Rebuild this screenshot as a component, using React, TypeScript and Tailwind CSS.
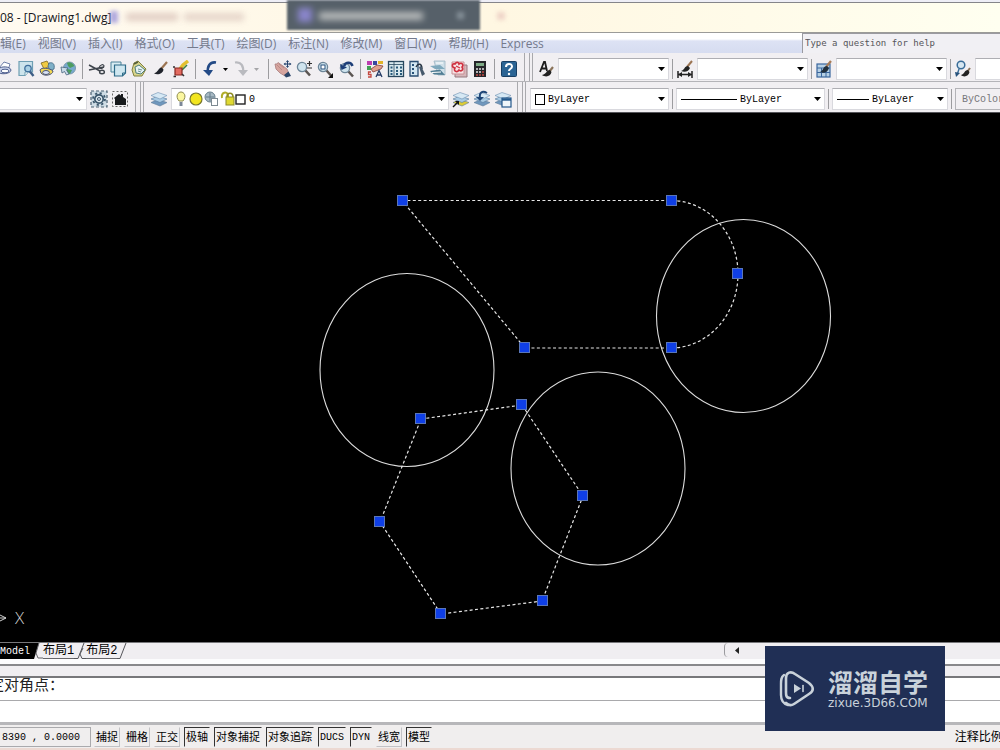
import type { ReactNode } from "react";
import { clsx } from "clsx";

const menus = [
  "编辑(E)",
  "视图(V)",
  "插入(I)",
  "格式(O)",
  "工具(T)",
  "绘图(D)",
  "标注(N)",
  "修改(M)",
  "窗口(W)",
  "帮助(H)",
  "Express",
];

const statusModes = [
  { label: "捕捉", on: false },
  { label: "栅格", on: false },
  { label: "正交", on: false },
  { label: "极轴", on: true },
  { label: "对象捕捉", on: true },
  { label: "对象追踪", on: true },
  { label: "DUCS", on: true, latin: true },
  { label: "DYN", on: true, latin: true },
  { label: "线宽", on: false },
  { label: "模型", on: true },
];

const Icon = ({ children }: { children: ReactNode }) => (
  <svg width="18" height="18" viewBox="0 0 18 18" fill="none" className="shrink-0">
    {children}
  </svg>
);

const Lens = ({ cx = 7, cy = 7 }: { cx?: number; cy?: number }) => (
  <>
    <path d={`M${cx + 3} ${cy + 3} l5 5.5`} stroke="#5b5552" strokeWidth="2.6" />
    <circle cx={cx} cy={cy} r="4.6" fill="#cfe4ee" stroke="#6d8699" strokeWidth="1.3" />
  </>
);

const Sheets = ({ bottom = "#6f97bd" }: { bottom?: string }) => (
  <>
    <path d="M1 12.5 L8 9.5 L17 12.5 L10 16 Z" fill={bottom} stroke="#5f7c98" strokeWidth=".6" />
    <path d="M1 9 L8 6 L17 9 L10 12.5 Z" fill="#a9cbe4" stroke="#54789c" strokeWidth=".6" />
    <path d="M1 5.5 L8 2.5 L17 5.5 L10 9 Z" fill="#d6e8f4" stroke="#6b8fb0" strokeWidth=".6" />
  </>
);

const Brush = () => (
  <>
    <path d="M16 2 L10 9" stroke="#9b7452" strokeWidth="2.2" />
    <path d="M10.5 7.5 C7 8 7.5 12 3 13.5 C7 15.5 12 13.5 12.5 9.5 Z" fill="#20242c" />
  </>
);

const icons: Record<string, ReactNode> = {
  plot: (
    <>
      <path d="M3 8 L8 2 L14 4 L12 10 Z" fill="#fff" stroke="#6f7fa8" />
      <path d="M2 9 C5 6 14 6 15 10 C15 14 4 15 2 12 Z" fill="#c6cfe8" stroke="#51618f" />
      <ellipse cx="9" cy="11" rx="4" ry="1.8" fill="#fff" stroke="#51618f" />
    </>
  ),
  preview: (
    <>
      <path d="M2 1.5 H15.5 V12 H11 L8 15.5 H2 Z" fill="#cde4ec" stroke="#6f9fb3" strokeWidth="1.2" />
      <path d="M8 15.5 V12 H11" fill="#fff" stroke="#6f9fb3" />
      <path d="M12.5 11 L16.5 16" stroke="#3d5e86" strokeWidth="2.4" />
      <circle cx="11" cy="8.5" r="3.2" fill="#a9d0e4" stroke="#3f6f9c" strokeWidth="1.3" />
    </>
  ),
  publish: (
    <>
      <path d="M3 3 L9 1 L12 6 L6 9 Z" fill="#f0ca42" stroke="#7b641d" strokeWidth=".8" />
      <path d="M11 3 C15 2 17 4 16 9 L12 11 L10 6 Z" fill="#7fb0c8" stroke="#3d6580" strokeWidth=".8" />
      <path d="M2 10 C3 7 12 8 15 11 C15 15 6 17 3 13 Z" fill="#f3d852" stroke="#4a5478" />
      <ellipse cx="8" cy="12.5" rx="3.4" ry="2" fill="#d8e1f3" stroke="#4a5478" />
    </>
  ),
  globe: (
    <>
      <circle cx="10.5" cy="8" r="6" fill="#77a9ce" stroke="#7b98ac" />
      <path d="M8 3 C10 1 14 3 15.5 6 L11 8 L9 6 Z M8 9 L13 10 L11 14 L7 13 Z" fill="#4d9c60" />
      <path d="M2 7 L9 8 L7.5 10 L10 14 L7.5 15 L5.5 11.5 L3 13 Z" fill="#c9dbe9" stroke="#47657e" strokeWidth=".8" />
    </>
  ),
  cut: (
    <>
      <path d="M1 5 L12 11 M1 10 L16 7" stroke="#3e444c" strokeWidth="1.5" />
      <ellipse cx="14" cy="12" rx="2.4" ry="1.8" stroke="#3e444c" strokeWidth="1.4" />
      <path d="M11 8 C12 4 16 4 16 6 C16 8 13 9 11 8" stroke="#3e444c" strokeWidth="1.2" />
    </>
  ),
  copy: (
    <>
      <path d="M2 2 H12 V12 H2 Z" fill="#d8edf3" stroke="#4c8299" />
      <path d="M5.5 5 H16.5 V13 L13.5 16 H5.5 Z" fill="#cfe7f0" stroke="#2d6b88" strokeWidth="1.2" />
      <path d="M13.5 16 V13 H16.5" stroke="#2d6b88" />
    </>
  ),
  paste: (
    <>
      <path d="M4 3 L8 1 L16 9 L12 16 H4 L2 10 Z" fill="#d9d58c" stroke="#81803e" />
      <path d="M5 7 L9 5 L15 10 L11 14 L6 13 Z" fill="#e8f3f5" stroke="#4d7e7a" />
      <path d="M8 9 L12 10 M8 11 L11 12" stroke="#4d7e7a" strokeWidth=".8" />
      <path d="M4 4 L8 2" stroke="#525c3b" strokeWidth="1.5" />
    </>
  ),
  brush: <Brush />,
  blockEdit: (
    <>
      <path d="M16 1 L11 5 L8 9" stroke="#e3c02e" strokeWidth="3.4" />
      <path d="M15 5 L10 10" stroke="#3c8043" strokeWidth="1.6" />
      <path d="M3 8 H10 V15 H3 Z" fill="#e36b60" stroke="#872823" strokeWidth="1.2" />
      <path d="M1.5 16.5 H4 M10 14 L12 16 M2 6 V8" stroke="#333" strokeWidth="1.5" />
    </>
  ),
  undo: (
    <>
      <path d="M15 2.5 C9 1.5 6 6 7 13" stroke="#234a86" strokeWidth="2.6" />
      <path d="M2 10 L8 16 L12 10 Z" fill="#234a86" />
    </>
  ),
  redo: (
    <>
      <path d="M3 2.5 C9 1.5 12 6 11 13" stroke="#b9babf" strokeWidth="2.2" />
      <path d="M6 10 L11 16 L16 10 Z" fill="#b9babf" />
    </>
  ),
  pan: (
    <>
      <path d="M1 4 L3 4 L4 2.5 L9 6 L13 9 L15 14 L11 16 L6 13 L2 9 Z" fill="#d6a49e" stroke="#a87c7c" strokeWidth=".8" />
      <path d="M3 5 L8 10 M5 4 L10 8" stroke="#b48584" strokeWidth=".8" />
      <path d="M10 15 L14.5 11.5 L17 16 L12 17.5 Z" fill="#2b4468" />
      <path d="M13.5 1 V7 M10.5 4 H16.5" stroke="#26446e" strokeWidth="1.1" />
      <path d="M13.5 0 L15 2 H12 Z M13.5 8 L15 6 H12 Z M9.5 4 L11.5 2.5 V5.5 Z M17.5 4 L15.5 2.5 V5.5 Z" fill="#26446e" />
    </>
  ),
  zoomRealtime: (
    <>
      <Lens />
      <path d="M14.5 1 V6 M12 3.5 H17 M12 8 H17" stroke="#333" strokeWidth="1.2" />
    </>
  ),
  zoomWindow: (
    <>
      <Lens />
      <rect x="5" y="5" width="4" height="4" fill="#fff" stroke="#28517c" />
      <path d="M17 13 V18 H12 Z" fill="#111" />
    </>
  ),
  zoomPrevious: (
    <>
      <Lens cx={8} cy={8} />
      <path d="M15.5 6 C14 2 9 1.5 7 6" stroke="#1d3e78" strokeWidth="2.6" />
      <path d="M3 4 L10 7.5 L4.5 10 Z" fill="#1d3e78" />
    </>
  ),
  properties: (
    <>
      <rect x="1" y="1" width="5" height="4" fill="#bd3fb0" />
      <rect x="7" y="1" width="4" height="4" fill="#3748a0" />
      <rect x="12" y="1" width="5" height="3" fill="#e2b328" />
      <rect x="1" y="6" width="4" height="4" fill="#41a154" />
      <path d="M5 9 L11 5 L17 6 L15 9 L7 12 Z" fill="#e0a08f" stroke="#833f38" strokeWidth=".8" />
      <path d="M5 12 H2.5 V14.5 H5 V17 H2" stroke="#c4473f" strokeWidth="1.3" />
      <path d="M10 17 L13 10.5 L16 17 M11 15 H15" stroke="#263d68" strokeWidth="1.3" />
    </>
  ),
  designCenter: (
    <>
      <rect x="1.5" y="1.5" width="15" height="15" fill="#d8e8ee" stroke="#28475e" strokeWidth="1.3" />
      <path d="M7 2 V16 M2 4.5 H16" stroke="#28475e" strokeWidth=".8" />
      <path d="M3.5 7.5 H5.5 M3.5 11 H5.5 M3.5 14 H5.5 M9 7.5 H11 M13 7.5 H15 M9 11 H11 M13 11 H15 M9 14 H11 M13 14 H15" stroke="#28597a" strokeWidth="1.8" />
    </>
  ),
  palettes: (
    <>
      <path d="M2 1.5 H10 V16 H2 Z" fill="#d3e6f2" stroke="#2a4d72" strokeWidth="1.3" />
      <path d="M4 5 H6 M4 9 H6 M4 13 H6" stroke="#275179" strokeWidth="2" />
      <path d="M8 7 C10 3 14 3 14 9" stroke="#263342" strokeWidth="1.4" />
      <path d="M11 7 L13 6 L17 14 L14 16 Z" fill="#47596c" />
    </>
  ),
  sheetSet: (
    <>
      <path d="M5 1 H16 V15 H9 Z" fill="#cfdfe8" stroke="#9db4c2" strokeWidth=".8" />
      <path d="M1 6 L11 5 L16 9 L6 9 Z" fill="#7fa9bd" />
      <path d="M1 11 L11 9.5 L16 15 L5 14.5 Z" fill="#507d94" />
      <path d="M7 3 H14 M3 12.5 L12 12" stroke="#fff" />
    </>
  ),
  markup: (
    <>
      <path d="M5 5 H17 V17 H5 Z" fill="#d6b6ba" stroke="#96797e" />
      <path d="M2 2 H14 V14 H2 Z" fill="#f6e3e5" stroke="#c98e94" />
      <path d="M5 4 C7 1 9 3 9 4 C12 2 14 5 12 7 C14 10 11 12 9 10 C7 13 3 11 5 8 C1 7 2 3 5 4 Z" stroke="#cf2f3e" strokeWidth="1.6" />
      <path d="M6 6 L10 8" stroke="#cf2f3e" strokeWidth="1.2" />
    </>
  ),
  calculator: (
    <>
      <rect x="3" y="1" width="12" height="16" fill="#26262a" />
      <rect x="5" y="3" width="8" height="3" fill="#7eaa86" />
      <path d="M5 9 H7 M8 9 H10 M11 9 H13 M5 12 H7 M8 12 H10" stroke="#e4e4e4" strokeWidth="1.6" />
      <path d="M11 12 H13 M5 15 H7 M8 15 H10 M11 15 H13" stroke="#c24a43" strokeWidth="1.6" />
    </>
  ),
  help: (
    <>
      <rect x="1.5" y="1.5" width="15" height="15" rx="1" fill="#2b6494" stroke="#183f64" />
      <path d="M6 7 C6 3 12 3 12 6.5 C12 9 9 8.5 9 11" stroke="#fff" strokeWidth="2" />
      <circle cx="9" cy="14" r="1.2" fill="#fff" />
    </>
  ),
  textStyle: (
    <>
      <path d="M3 12 L7 2 H8 L10 11 M4.5 8.5 H10" stroke="#1d1d1d" strokeWidth="1.8" />
      <path d="M16 7 L12 12" stroke="#8a7359" strokeWidth="2.2" />
      <path d="M13 10 C9 10 10 14 5 15 C9 18 14 16 14.5 12 Z" fill="#222" />
    </>
  ),
  dimStyle: (
    <>
      <path d="M16 1 L11 7" stroke="#9b7452" strokeWidth="2" />
      <path d="M12 6 C8 6 9 10 5 11 C9 13 13 11 14 8 Z" fill="#222" />
      <path d="M2 11 V18 M16 11 V18 M2 14.5 H16" stroke="#222" strokeWidth="1.5" />
      <path d="M2 14.5 L6 12 V17 Z M16 14.5 L12 12 V17 Z" fill="#222" />
    </>
  ),
  tableStyle: (
    <>
      <rect x="2" y="4" width="13" height="13" fill="#b6d0e5" stroke="#3a669d" strokeWidth="1.2" />
      <path d="M2 8 H15 M2 12.5 H15 M6.5 8 V17 M11 8 V17" stroke="#3a669d" />
      <path d="M16 1 L11 7" stroke="#a97b56" strokeWidth="2.2" />
      <path d="M12 6 C8 6 9 10 5 12 C9 14 13 12 14 8 Z" fill="#22303d" />
    </>
  ),
  leaderStyle: (
    <>
      <circle cx="7" cy="5" r="3.8" fill="#d7e7f1" stroke="#396c98" strokeWidth="1.5" />
      <path d="M5 9 L3 15" stroke="#396c98" strokeWidth="1.4" />
      <path d="M1 12 L6 13 L2 17 Z" fill="#27527c" />
      <path d="M16 8 L13 12" stroke="#8a7359" strokeWidth="2" />
      <path d="M14 10 C10 10 11 14 7 15 C10 18 15 16 15.5 12 Z" fill="#222" />
    </>
  ),
  gear: (
    <>
      <rect x="1" y="1" width="16" height="16" fill="#cfdce5" stroke="#4a6072" strokeWidth="1.2" strokeDasharray="3 2" />
      <circle cx="9" cy="9" r="4.2" fill="#dfe9ef" stroke="#3b566c" strokeWidth="1.7" />
      <circle cx="9" cy="9" r="6" stroke="#3b566c" strokeWidth="1.8" strokeDasharray="2.2 2.5" />
      <circle cx="9" cy="9" r="1.5" stroke="#3b566c" />
    </>
  ),
  home: (
    <>
      <path d="M1.5 1.5 H16.5 V16.5 H1.5 Z" stroke="#666" strokeDasharray="2 2" />
      <path d="M3 8 L8 4 L10 5.5 V4 H12 V7 L15 9 V15 H4 V9 Z" fill="#17191c" />
    </>
  ),
  layers: <Sheets />,
  layerCurrent: (
    <>
      <Sheets bottom="#dccb35" />
      <path d="M1 17 L6 12" stroke="#111" strokeWidth="1.4" />
      <path d="M3 11 H7 V15 Z" fill="#111" />
    </>
  ),
  layerPrevious: (
    <>
      <Sheets />
      <path d="M14 3 C9 0 6 3 7 8" stroke="#1e4577" strokeWidth="2" />
      <path d="M3 7 H11 L7 11 Z" fill="#1e4577" />
    </>
  ),
  layerStates: (
    <>
      <Sheets />
      <rect x="8" y="8" width="9" height="9" fill="#eff6fa" stroke="#23588b" strokeWidth="1.2" />
      <path d="M8 9.5 H17" stroke="#23588b" strokeWidth="2.4" />
    </>
  ),
};

const ToolButton = ({ name, label }: { name: string; label: string }) => (
  <button type="button" aria-label={label} className="shrink-0">
    <Icon>{icons[name]}</Icon>
  </button>
);

const Group = ({ items }: { items: string[] }) => (
  <div className="flex shrink-0 items-center gap-[3px]">
    {items.map((name) => (
      <ToolButton key={name} name={name} label={name} />
    ))}
  </div>
);

const Arrow = ({ className = "text-black" }: { className?: string }) => (
  <svg width="7" height="4" viewBox="0 0 7 4" className={clsx("shrink-0", className)}>
    <path d="M0 0 H7 L3.5 4 Z" fill="currentColor" />
  </svg>
);

const SmallArrow = ({ label, className }: { label: string; className: string }) => (
  <button type="button" aria-label={label} className={clsx("flex w-[13px] shrink-0 justify-center", className)}>
    <svg width="5" height="3" viewBox="0 0 5 3">
      <path d="M0 0 H5 L2.5 3 Z" fill="currentColor" />
    </svg>
  </button>
);

const Separator = ({ className = "mx-[5px]" }: { className?: string }) => (
  <div className={clsx("h-5 w-px shrink-0 bg-[#9c9c9f]", className)} />
);

const Grip = () => (
  <div className="mx-1 flex h-full w-1 shrink-0 justify-between">
    <div className="w-px bg-[#a9a9ad]" />
    <div className="w-px bg-[#a9a9ad]" />
  </div>
);

const Combo = ({
  label,
  value = "",
  width,
  children,
}: {
  label: string;
  value?: string;
  width: string;
  children?: ReactNode;
}) => (
  <label
    className={clsx(
      "flex h-[22px] shrink-0 items-center gap-[3px] border border-[#d9d9de] border-t-[#aeaeb3] bg-white pr-[3px] pl-1",
      width,
    )}
  >
    {children}
    <select
      aria-label={label}
      className="min-w-0 flex-1 appearance-none bg-transparent font-['Liberation_Mono',monospace] text-[10px] text-black"
    >
      <option>{value}</option>
    </select>
    <Arrow />
  </label>
);

const TitleBar = () => (
  <header className="relative flex h-[33px] shrink-0 items-center overflow-hidden border-b border-[#9b9b98] bg-gradient-to-r from-[#fffaf0] via-[#fff7e2] to-[#fffff0]">
    <div className="absolute inset-x-0 top-0 h-[3px] border-b border-[#85858a] bg-[#eeeef6]" />
    <h1 className="mt-1 font-['Open_Sans',sans-serif] text-[12px] whitespace-nowrap text-[#16161a]">
      08 - [Drawing1.dwg]
    </h1>
    {/* Browser tabs showing through the glass */}
    <div className="absolute top-[11px] left-[110px] h-3 w-2 bg-[#8f86d8] opacity-70 blur-[2px]" />
    <div className="absolute top-[13px] left-[126px] h-2 w-[52px] bg-[#d6bdb4] opacity-70 blur-[3px]" />
    <div className="absolute top-[13px] left-[184px] h-2 w-[60px] bg-[#dcc7bd] opacity-70 blur-[3px]" />
    <div className="absolute top-0 left-[287px] h-[30px] w-[193px] bg-[#566069] blur-[1px]">
      <div className="absolute top-2 left-[11px] h-[14px] w-[14px] bg-[#8b86cc] blur-[3px]" />
      <div className="absolute top-3 left-[32px] h-2 w-[104px] bg-[#b9bcbc] blur-[3px]" />
      <div className="absolute top-3 left-[170px] h-[7px] w-[7px] bg-[#89949c] blur-[2px]" />
    </div>
    <div className="absolute top-[12px] left-[497px] h-2 w-2 bg-[#e8c6bd] opacity-70 blur-[2px]" />
  </header>
);

const MenuBar = () => (
  <nav className="flex h-5 shrink-0 items-stretch overflow-hidden bg-gradient-to-b from-white from-30% via-[#dde2f4] via-40% to-[#d6dcf0]">
    <div className="-ml-3 flex flex-1 items-center gap-3 pt-[2px] font-['Open_Sans','Noto_Sans_CJK_SC',sans-serif] text-[12px] text-[#747a8c]">
      {menus.map((menu) => (
        <button key={menu} type="button" className="shrink-0 whitespace-nowrap">
          {menu}
        </button>
      ))}
    </div>
    <input
      aria-label="Help search"
      defaultValue="Type a question for help"
      className="w-[198px] shrink-0 border-t border-l border-[#9a9aa0] bg-[#f1f0f4] pl-[2px] font-['DejaVu_Sans_Mono',monospace] text-[9px] text-[#55555a]"
    />
  </nav>
);

const StandardToolbar = () => (
  <div className="flex h-[29px] shrink-0 overflow-hidden border-b border-[#b4b4b8] bg-[#f1eff2]">
    <div className="-ml-1 flex shrink-0 items-center border-r border-[#a9a9ad] pt-1 pr-[6px]">
      <Group items={["plot", "preview", "publish", "globe"]} />
      <Separator />
      <Group items={["cut", "copy", "paste", "brush", "blockEdit"]} />
      <Separator />
      <ToolButton name="undo" label="Undo" />
      <SmallArrow label="Undo list" className="text-black" />
      <ToolButton name="redo" label="Redo" />
      <SmallArrow label="Redo list" className="text-[#a5a5a8]" />
      <Separator />
      <Group items={["pan", "zoomRealtime", "zoomWindow", "zoomPrevious"]} />
      <Separator />
      <Group items={["properties", "designCenter", "palettes", "sheetSet", "markup", "calculator"]} />
      <Separator />
      <ToolButton name="help" label="Help" />
    </div>
    <Grip />
    <div className="flex shrink-0 items-center gap-[3px] pt-1">
      <ToolButton name="textStyle" label="Text style" />
      <Combo label="Text style list" width="w-[111px]" />
      <Separator className="" />
      <ToolButton name="dimStyle" label="Dimension style" />
      <Combo label="Dimension style list" width="w-[111px]" />
      <Separator className="" />
      <ToolButton name="tableStyle" label="Table style" />
      <Combo label="Table style list" width="w-[111px]" />
      <Separator className="" />
      <ToolButton name="leaderStyle" label="Multileader style" />
      <Combo label="Multileader style list" width="w-[111px]" />
    </div>
  </div>
);

const LayerStateIcons = () => (
  <svg width="70" height="16" viewBox="0 0 70 16" fill="none" className="shrink-0">
    <path d="M3 10 C-1 5 2 1 5 1 C8 1 11 5 7 10 Z" fill="#fbf7a0" stroke="#8d8a4c" />
    <path d="M3.5 11 H6.5 V15 H3.5 Z" fill="#7b8798" />
    <circle cx="20" cy="8" r="6" fill="#f2e51f" stroke="#77762c" strokeWidth="1.2" />
    <circle cx="34" cy="6" r="5" fill="#a8bac4" stroke="#657d8b" />
    <path d="M30 6 H38 M34 2 V10" stroke="#657d8b" />
    <rect x="35.5" y="7.5" width="6" height="7" fill="#fff" stroke="#7c8992" />
    <path d="M46 7 C45 1 51 0 52 4 V7" stroke="#b1ad2a" strokeWidth="2" />
    <path d="M51 6 C51 1 57 1 57 6" stroke="#8f8c22" strokeWidth="1.6" />
    <rect x="50" y="6" width="8" height="8" fill="#dfd932" stroke="#8c892c" />
    <rect x="60" y="4" width="9" height="9" fill="#fff" stroke="#222" strokeWidth="1.4" />
  </svg>
);

const LayerToolbar = () => (
  <div className="flex h-[31px] shrink-0 overflow-hidden border-b border-[#55555a] bg-[#f1eff2]">
    <div className="-ml-1 flex shrink-0 items-center gap-[3px] border-r border-[#a9a9ad] pt-1 pr-[6px]">
      <Combo label="Workspace" width="w-[91px]" />
      <Group items={["gear", "home"]} />
    </div>
    <Grip />
    <div className="flex shrink-0 items-center gap-[3px] border-r border-[#a9a9ad] pt-1 pr-[5px] pl-[2px]">
      <ToolButton name="layers" label="Layer properties" />
      <Combo label="Layer" value="0" width="w-[278px]">
        <LayerStateIcons />
      </Combo>
      <Group items={["layerCurrent", "layerPrevious", "layerStates"]} />
    </div>
    <Grip />
    <div className="flex shrink-0 items-center gap-[3px] pt-1">
      <Combo label="Color" value="ByLayer" width="w-[139px]">
        <div className="h-[11px] w-[10px] border border-black" />
      </Combo>
      <Separator className="" />
      <Combo label="Linetype" value="ByLayer" width="w-[149px]">
        <div className="h-px w-14 bg-black" />
      </Combo>
      <Separator className="" />
      <Combo label="Lineweight" value="ByLayer" width="w-[116px]">
        <div className="h-px w-8 bg-black" />
      </Combo>
      <Separator className="" />
      <button
        type="button"
        className="h-[22px] w-[111px] shrink-0 border border-[#b3b3b7] pl-[6px] text-left font-['Liberation_Mono',monospace] text-[10px] text-[#77777b]"
      >
        ByColor
      </button>
    </div>
  </div>
);

const circles = [
  { cx: 407, cy: 257 },
  { cx: 743.5, cy: 203 },
  { cx: 598, cy: 355.5 },
];

const grips = [
  [402, 88],
  [671, 88],
  [737, 161],
  [671, 235],
  [524, 235],
  [420, 306],
  [521, 292],
  [582, 383],
  [542, 488],
  [440, 501],
  [379, 409],
];

const ModelSpace = () => (
  <main className="min-h-0 flex-1 bg-black">
    <svg viewBox="0 0 1000 529" preserveAspectRatio="xMinYMin slice" className="h-full w-full" fill="none">
      <g stroke="#dcdcdc" strokeWidth="1.1">
        {circles.map((c) => (
          <ellipse key={c.cx} cx={c.cx} cy={c.cy} rx="87" ry="96.5" />
        ))}
      </g>
      <g stroke="#e6e6e6" strokeWidth="1.2" strokeDasharray="3 2.4">
        <path d="M402 87.5 H671 A67 73.5 0 0 1 738 161 A67 74 0 0 1 671 235 H525 Z" />
        <path d="M421 306 L522 292 L583 383 L542 488 L441 501 L380 409 Z" />
      </g>
      {grips.map(([x, y]) => (
        <rect key={`${x}-${y}`} x={x - 4.5} y={y - 5.5} width="10" height="10" fill="#0f3fe6" stroke="#5a76b8" />
      ))}
      <path d="M0 502 L6 505 L0 508 M0 505 H6" stroke="#d0d0d0" />
      <text x="15" y="511" fill="#d0d0d0" className="font-['Open_Sans',sans-serif] text-[17px] font-light">
        X
      </text>
    </svg>
  </main>
);

const LayoutTabs = () => (
  <div className="flex h-[22px] shrink-0 items-start border-t border-[#77777a] bg-gradient-to-b from-[#f0eef1] from-75% to-[#fcfcfd] to-75%">
    <div className="flex h-4 flex-1 items-stretch font-['Liberation_Mono','Noto_Sans_CJK_SC',monospace]">
      <button type="button" className="bg-black text-[10px] text-white">
        Model
      </button>
      <svg width="13" height="16" viewBox="0 0 13 16" className="shrink-0">
        <path d="M0 0 H9 L4 16 H0 Z" fill="#000" />
        <path d="M9 0 L6 10 L8 15 H13" fill="none" stroke="#66666a" />
      </svg>
      <button type="button" className="border-b border-[#66666a] text-[12px] leading-4 whitespace-nowrap">
        布局1
      </button>
      <svg width="12" height="16" viewBox="0 0 12 16" fill="none" stroke="#55555a" className="shrink-0">
        <path d="M0 15.5 H4 L10 0 M9 5 L6 11 L8 15.5 H12" />
      </svg>
      <button type="button" className="border-b border-[#66666a] text-[12px] leading-4 whitespace-nowrap">
        布局2
      </button>
      <svg width="12" height="16" viewBox="0 0 12 16" fill="none" stroke="#55555a" className="shrink-0">
        <path d="M0 15.5 H3 L9 0" />
      </svg>
    </div>
    <button
      type="button"
      aria-label="Scroll left"
      className="flex h-[14px] w-[276px] items-center rounded-l-sm border-l border-[#99999d] pl-[10px]"
    >
      <svg width="4" height="7" viewBox="0 0 4 7">
        <path d="M4 0 V7 L0 3.5 Z" fill="#222" />
      </svg>
    </button>
  </div>
);

const CommandLine = () => (
  <section className="shrink-0 border-t-2 border-[#88888b] bg-white">
    <div className="h-[10px] bg-[#f0eef1]" />
    <p className="h-[25px] overflow-hidden border-t-2 border-b border-t-[#77777a] border-b-[#a9a9ac] font-['Liberation_Mono','Noto_Sans_CJK_SC',monospace] text-[15px] leading-[18px] text-[#222]">
      <span className="-ml-[11px]">定对角点：</span>
    </p>
    <input aria-label="Command" className="block h-[21px] w-full bg-white px-1 text-[12px] outline-none" />
  </section>
);

const StatusBar = () => (
  <footer className="flex h-[28px] shrink-0 items-start border-t-[3px] border-b-2 border-t-[#b7b7ba] border-b-[#ecd9d2] bg-[#f0eeee] pt-[2px] font-['Liberation_Mono','Noto_Sans_CJK_SC',monospace] text-[11px] text-black">
    <output className="h-5 w-[91px] shrink-0 border border-l-0 border-[#aaaaad] pl-[2px] text-[10px] leading-5 whitespace-pre">
      8390 , 0.0000
    </output>
    <div className="ml-[3px] flex flex-1 gap-1">
      {statusModes.map(({ label, on, latin }) => (
        <button
          key={label}
          type="button"
          aria-pressed={on}
          className={clsx(
            "h-5 shrink-0 border px-px leading-5 whitespace-nowrap",
            on ? "border-transparent border-t-[#333] border-l-[#333]" : "border-transparent border-r-[#c2c2c5] border-b-[#c2c2c5]",
            latin && "text-[10px]",
          )}
        >
          {label}
        </button>
      ))}
    </div>
    <div className="-mr-[10px] shrink-0 text-[12px] leading-[22px]">注释比例:</div>
  </footer>
);

const Watermark = () => (
  <aside className="absolute right-[55px] bottom-[19px] flex h-[85px] w-[180px] items-center gap-[13px] bg-[#202f55] pl-[14px] text-[#c9d2da]">
    <svg width="36" height="36" viewBox="0 0 36 36" fill="none" stroke="currentColor" strokeLinecap="round" className="shrink-0">
      <path d="M5 4 C2 6 2 9 2 13 V24 C2 30 5 33 9 34" strokeWidth="2.4" />
      <path d="M11 27 C7 27 7 24 7 21 V7 C7 1 12 0 16 3 L30 12 C35 16 35 20 30 23 L15 33 C12 35 9 34 7 32" strokeWidth="2.6" />
      <path d="M15 13 V22 L22 17.5 Z" fill="currentColor" stroke="none" />
      <path d="M24 14.5 V20.5" strokeWidth="1.6" />
    </svg>
    <div className="whitespace-nowrap">
      <p className="font-['Noto_Sans_CJK_SC',sans-serif] text-[25px] leading-7 font-bold">溜溜自学</p>
      <p className="font-['DejaVu_Sans',sans-serif] text-[12px] leading-4">zixue.3D66.COM</p>
    </div>
  </aside>
);

export default function App() {
  return (
    <div className="relative flex h-screen flex-col overflow-hidden bg-[#f0eef1]">
      <TitleBar />
      <MenuBar />
      <StandardToolbar />
      <LayerToolbar />
      <ModelSpace />
      <LayoutTabs />
      <CommandLine />
      <StatusBar />
      <Watermark />
    </div>
  );
}
